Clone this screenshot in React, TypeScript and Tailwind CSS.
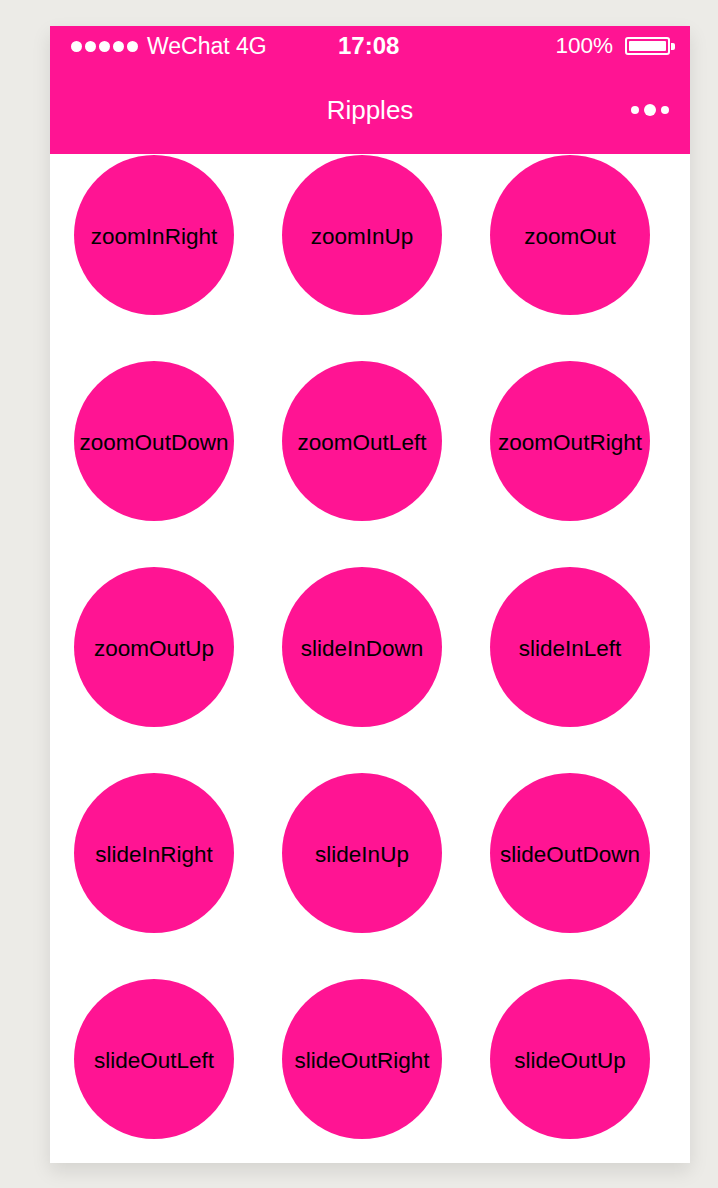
import React from 'react';

// Animation names shown as ripple buttons
const animations = [
  'zoomInRight',
  'zoomInUp',
  'zoomOut',
  'zoomOutDown',
  'zoomOutLeft',
  'zoomOutRight',
  'zoomOutUp',
  'slideInDown',
  'slideInLeft',
  'slideInRight',
  'slideInUp',
  'slideOutDown',
  'slideOutLeft',
  'slideOutRight',
  'slideOutUp'
];

function StatusBar() {
  return (
    <div className="relative flex h-[40px] items-center pl-[21px] pr-[15px] text-[23px] text-white">
      <div className="flex items-center gap-[3px]">
        {[0, 1, 2, 3, 4].map((i) => (
          <span key={i} className="block h-[11px] w-[11px] rounded-full bg-white" />
        ))}
      </div>
      <span className="ml-[9px]">WeChat 4G</span>
      <span className="absolute left-[288px] text-[24px] font-semibold">17:08</span>
      <div className="ml-auto flex items-center">
        <span className="mr-[12px] text-[22.5px]">100%</span>
        <div className="flex items-center">
          <div className="flex h-[18px] w-[45px] items-center rounded-[3px] border-2 border-white p-[2px]">
            <div className="h-full w-full rounded-[1px] bg-white" />
          </div>
          <div className="ml-[1px] h-[7px] w-[4px] rounded-r-[2px] bg-white" />
        </div>
      </div>
    </div>
  );
}

function NavBar() {
  return (
    <div className="relative flex h-[88px] items-center justify-center">
      <span className="text-[26px] font-medium text-white">Ripples</span>
      <div className="absolute right-[21px] top-[38px] flex items-center gap-[5px]">
        <span className="block h-[8px] w-[8px] rounded-full bg-white" />
        <span className="block h-[12px] w-[12px] rounded-full bg-white" />
        <span className="block h-[8px] w-[8px] rounded-full bg-white" />
      </div>
    </div>
  );
}

export default function App() {
  return (
    <div
      className="min-h-[1188px] w-full bg-[#ecebe7] pl-[50px] pt-[26px]"
      style={{ fontFamily: '"Liberation Sans", Arial, Helvetica, sans-serif' }}
    >
      <div className="w-[640px] bg-white shadow-[0_8px_18px_rgba(0,0,0,0.10)]">
        {/* Header */}
        <div className="bg-[#ff1493]">
          <StatusBar />
          <NavBar />
        </div>

        {/* Ripple grid */}
        <div className="grid grid-cols-[repeat(3,208px)] gap-y-[46px] pb-[24px] pt-px">
          {animations.map((name) => (
            <div key={name} className="pl-[24px]">
              <div className="flex h-[160px] w-[160px] items-center justify-center whitespace-nowrap rounded-full bg-[#ff1493] pt-[3px] text-[22.5px] text-black">
                {name}
              </div>
            </div>
          ))}
        </div>
      </div>
    </div>
  );
}
